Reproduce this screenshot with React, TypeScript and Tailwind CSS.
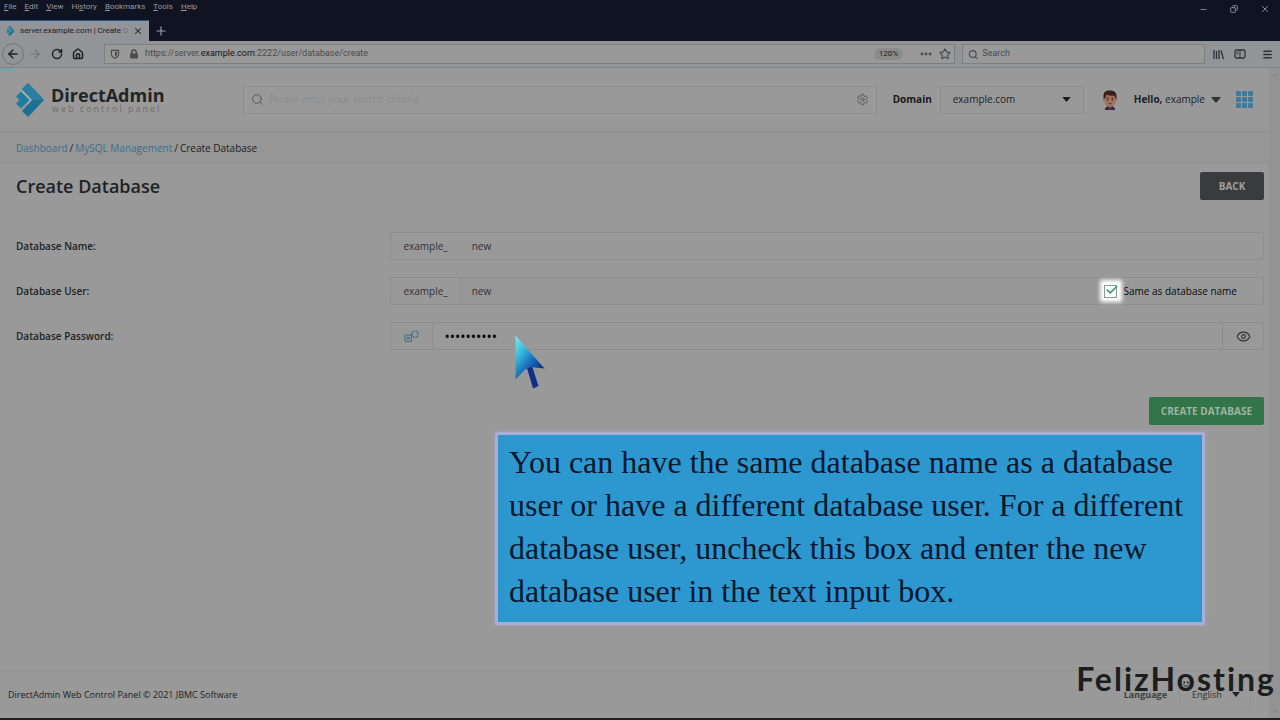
import type { ReactNode } from "react";
import {
	ArrowLeft,
	ArrowRight,
	Check,
	ChevronDown,
	ChevronUp,
	Copy,
	Ellipsis,
	Eye,
	House,
	Menu,
	Minus,
	Plus,
	RotateCw,
	Search,
	Settings,
	Star,
	X,
} from "lucide-react";

const MENU = ["File", "Edit", "View", "History", "Bookmarks", "Tools", "Help"];
// index of the underlined access key for each entry above
const ACCESS_KEYS = [0, 0, 0, 2, 0, 0, 0];

function LogoMark({ className }: { className: string }) {
	return (
		<svg viewBox="0 0 28 34" className={className} aria-hidden="true">
			<path d="M12 0 28 17 12 34 6 28 16 17 6 6Z" fill="#1c7091" />
			<path d="M12 0 28 17H16L6 6Z" fill="#2a7fa3" />
			<path d="M5 8.500 13.500 17 5 25.500 0 20.500 3.500 17 0 13.500Z" fill="#1f7ca2" />
			<path d="M5.500 7.500 15 17 12 20.500" fill="none" stroke="#a3b3b8" strokeWidth="1.200" />
		</svg>
	);
}

function Caret({ className }: { className: string }) {
	return (
		<svg viewBox="0 0 10 6" className={className} aria-hidden="true">
			<path d="M0 0H10L5 6Z" fill="currentColor" />
		</svg>
	);
}

function LibraryIcon() {
	return (
		<svg viewBox="0 0 11 11" className="h-[11px] w-[11px]" aria-hidden="true">
			<path d="M1 1V10M3.500 2V10M6 1V10M8 1.500 10.500 10" stroke="currentColor" strokeWidth="1.300" fill="none" />
		</svg>
	);
}

function SidebarIcon() {
	return (
		<svg viewBox="0 0 12 10" className="h-[10px] w-3" fill="none" stroke="currentColor" aria-hidden="true">
			<rect x="1" y="1" width="10" height="8" rx="1.500" strokeWidth="1.300" />
			<path d="M6 1V9M2.500 3.200H4.500M2.500 5H4.500" />
		</svg>
	);
}

function ShieldIcon() {
	return (
		<svg viewBox="0 0 10 11" className="h-[10px] w-[10px]" aria-hidden="true">
			<path d="M1 1.500H9V5C9 7.500 7.500 9.300 5 10.300 2.500 9.300 1 7.500 1 5Z" fill="none" stroke="currentColor" strokeWidth="1.200" />
			<path d="M5 3H7.300V5C7.300 6.600 6.400 7.800 5 8.500Z" fill="currentColor" />
		</svg>
	);
}

function LockIcon() {
	return (
		<svg viewBox="0 0 10 10" className="h-[10px] w-[10px]" aria-hidden="true">
			<path d="M2.700 5V3.300A2.300 2.300 0 0 1 7.300 3.300V5" fill="none" stroke="currentColor" strokeWidth="1.500" />
			<rect x="1" y="4.500" width="8" height="5" rx="0.800" fill="currentColor" />
		</svg>
	);
}

function Avatar() {
	return (
		<svg viewBox="0 0 16 20" className="h-5 w-4" aria-hidden="true">
			<path d="M3 20C3 17 5 16 8 16S13 17 13 20Z" fill="#2c2b3e" />
			<path d="M6 15.500H10L8 20Z" fill="#9b9098" />
			<path d="M7.400 16.500H8.600L9 20H7Z" fill="#7a2938" />
			<circle cx="2.200" cy="9.500" r="1.400" fill="#8d6450" />
			<circle cx="13.800" cy="9.500" r="1.400" fill="#8d6450" />
			<path d="M2.500 5H13.500V11C13.500 14.500 11 16.500 8 16.500S2.500 14.500 2.500 11Z" fill="#a0735c" />
			<path d="M1.600 8C.8 3 3 .5 7 .5 12 0 15.500 2.500 14.400 8L13.200 8.500 12.500 5.500C9 6 6 5.500 4.500 4.500L3 8.500Z" fill="#3b1d19" />
			<path d="M4.500 8H6.700M9.300 8H11.500" stroke="#3b1d19" strokeWidth=".8" />
			<circle cx="5.700" cy="9.700" r=".7" fill="#2b1a18" />
			<circle cx="10.300" cy="9.700" r=".7" fill="#2b1a18" />
			<path d="M6 13C7.200 14 8.800 14 10 13" stroke="#5f3430" strokeWidth=".8" fill="none" />
		</svg>
	);
}

function DiceIcon() {
	return (
		<svg viewBox="0 0 15 12" className="h-3 w-[15px]" fill="none" stroke="#3d6f89" strokeWidth="1.100" aria-hidden="true">
			<rect x="1" y="5" width="6.500" height="6.500" rx="1" />
			<path d="M2.800 6.800 5.700 9.700M5.700 6.800 2.800 9.700" />
			<path d="M7.500 4 8.500 1.500 12 .8 14.200 3 13.500 6.500 10.500 7.500 8.500 6Z" strokeDasharray="2.500 .6" />
		</svg>
	);
}

function FormRow({ id, label, children }: { id: string; label: string; children: ReactNode }) {
	return (
		<div className="flex items-center">
			<label htmlFor={id} className="w-[30%] shrink-0 font-semibold text-[#202224]">
				{label}
			</label>
			<div className="flex h-7 min-w-0 flex-1 rounded-xs border border-[#8e8e8e] text-[#303234]">{children}</div>
		</div>
	);
}

function BrowserChrome() {
	return (
		<div className="font-['Roboto',sans-serif] text-[8px] text-[#202224]">
			<div className="flex justify-between bg-[#101422]">
				<div>
					<nav className="flex h-[14px] items-center gap-2 pl-1 text-[#9799a0]">
						{MENU.map((item, i) => (
							<button key={item} type="button">
								{item.slice(0, ACCESS_KEYS[i])}
								<u>{item[ACCESS_KEYS[i]]}</u>
								{item.slice(ACCESS_KEYS[i] + 1)}
							</button>
						))}
					</nav>
					<div className="flex items-end pt-[6px]">
						<div className="flex h-[21px] w-[149px] items-center gap-1 border-t border-[#23558f] bg-[#929497] px-[6px]">
							<LogoMark className="h-[10px] w-[9px] shrink-0" />
							<span className="flex-1 whitespace-nowrap pl-px">
								server.example.com | Create <span className="text-[#737578]">D</span>
							</span>
							<button type="button" aria-label="Close tab">
								<X className="h-[10px] w-[10px]" strokeWidth={2.5} />
							</button>
						</div>
						<button type="button" aria-label="New tab" className="flex h-[21px] w-6 items-center justify-center text-[#a0a2a8]">
							<Plus className="h-[14px] w-[14px]" />
						</button>
					</div>
				</div>
				<div className="flex h-[18px] items-center gap-[22px] pr-[10px] text-[#a0a2a8]">
					<button type="button" aria-label="Minimize">
						<Minus className="h-[9px] w-[9px]" />
					</button>
					<button type="button" aria-label="Restore">
						<Copy className="h-2 w-2 -scale-x-100" strokeWidth={2.5} />
					</button>
					<button type="button" aria-label="Close">
						<X className="h-[10px] w-[10px]" />
					</button>
				</div>
			</div>

			<div className="flex h-[27px] items-center border-b border-[#858585] bg-[#929497] pr-[7px] pl-[2px]">
				<button type="button" aria-label="Back" className="flex h-[22px] w-[22px] items-center justify-center rounded-full border border-[#747577]">
					<ArrowLeft className="h-[14px] w-[14px]" strokeWidth={2.5} />
				</button>
				<button type="button" aria-label="Forward" className="ml-1 text-[#717375]">
					<ArrowRight className="h-[14px] w-[14px]" />
				</button>
				<button type="button" aria-label="Reload" className="ml-[9px]">
					<RotateCw className="h-3 w-3" strokeWidth={3} />
				</button>
				<button type="button" aria-label="Home" className="ml-[9px]">
					<House className="h-3 w-3" strokeWidth={3} />
				</button>
				<div className="ml-5 flex h-5 flex-1 items-center border border-[#7d7f81] bg-[#999] pl-[5px] text-[#4a4c4e]">
					<ShieldIcon />
					<span className="ml-[9px]">
						<LockIcon />
					</span>
					<div
						role="textbox"
						aria-label="Address"
						contentEditable
						suppressContentEditableWarning
						className="ml-[6px] flex-1 text-[9px]"
					>
						https://server.<span className="text-[#151617]">example.com</span>:2222/user/database/create
					</div>
					<button type="button" className="rounded-full bg-[#8b8b8b] px-[5px] text-[#202224]">
						120%
					</button>
					<button type="button" aria-label="Page actions" className="ml-4">
						<Ellipsis className="h-[14px] w-[14px]" strokeWidth={3} />
					</button>
					<button type="button" aria-label="Bookmark this page" className="ml-[6px] mr-[3px]">
						<Star className="h-3 w-3" strokeWidth={2.5} />
					</button>
				</div>
				<div className="ml-[7px] flex h-5 w-[243px] items-center gap-1 border border-[#7d7f81] bg-[#999] pl-[5px] text-[#4a4c4e]">
					<Search className="h-[11px] w-[11px]" strokeWidth={2.5} />
					<input aria-label="Search the web" placeholder="Search" className="w-full text-[9px] outline-none placeholder:text-[#4a4c4e]" />
				</div>
				<div className="ml-2 flex items-center gap-[10px] text-[#303234]">
					<button type="button" aria-label="Library">
						<LibraryIcon />
					</button>
					<button type="button" aria-label="Sidebars">
						<SidebarIcon />
					</button>
					<button type="button" aria-label="Open menu" className="ml-[6px]">
						<Menu className="h-[11px] w-[11px]" strokeWidth={3} />
					</button>
				</div>
			</div>
		</div>
	);
}

function PanelHeader() {
	return (
		<header className="flex h-[64px] items-center border-b border-[#8c8c8c] pr-4 pl-4">
			<a href="#" className="flex items-center gap-[7px]">
				<LogoMark className="h-[34px] w-7" />
				<span className="flex flex-col">
					<span className="text-[18px] leading-[18px] font-bold text-[#222426]">DirectAdmin</span>
					<span className="pl-px text-[9px] leading-[9px] tracking-[2px] text-[#6b6d6f]">web control panel</span>
				</span>
			</a>
			<div className="ml-[78px] flex h-7 flex-1 items-center gap-[5px] rounded-xs border border-[#8e8e8e] px-[7px] text-[#4a4c4e]">
				<Search className="h-[13px] w-[13px] shrink-0" strokeWidth={1.5} />
				<input
					aria-label="Search"
					placeholder="Please enter your search criteria"
					className="w-full outline-none placeholder:text-[#8c8c8c]"
				/>
				<button type="button" aria-label="Search settings">
					<Settings className="h-[13px] w-[13px]" strokeWidth={1.5} />
				</button>
			</div>
			<label htmlFor="domain" className="ml-4 font-bold text-[#17191b]">
				Domain
			</label>
			<div className="relative ml-2 flex h-7 w-[144px] items-center rounded-xs border border-[#8e8e8e]">
				<select id="domain" className="h-full w-full appearance-none pl-3 text-[#202224] outline-none">
					<option>example.com</option>
				</select>
				<Caret className="pointer-events-none absolute right-3 h-[5px] w-[9px] text-[#17191b]" />
			</div>
			<span className="ml-[18px]">
				<Avatar />
			</span>
			<button type="button" className="ml-4 flex items-center gap-[6px] text-[#202224]">
				<span>
					<b>Hello,</b> example
				</span>
				<Caret className="h-[6px] w-[10px] text-[#303234]" />
			</button>
			<button type="button" aria-label="Apps" className="ml-[15px] grid grid-cols-3 gap-px">
				{Array.from({ length: 9 }, (_, i) => (
					<span key={i} className="h-[5px] w-[5px] rounded-[1px] bg-[#3f7a98]" />
				))}
			</button>
		</header>
	);
}

function CreateForm() {
	return (
		<form className="flex flex-col gap-[17px] pt-8 pr-[5px] pl-4">
			<FormRow id="db-name" label="Database Name:">
				<span className="flex items-center pr-3 pl-3">example_</span>
				<input id="db-name" defaultValue="new" className="min-w-0 flex-1 pl-3 outline-none" />
			</FormRow>
			<FormRow id="db-user" label="Database User:">
				<span className="flex items-center border-r border-[#929292] pr-[11px] pl-3">example_</span>
				<input id="db-user" defaultValue="new" readOnly className="min-w-0 flex-1 bg-[#969696] pl-3 outline-none" />
				<label className="flex items-center gap-[6px] pr-[26px] text-[#07090b]">
					<span className="relative flex h-[14px] w-[14px] items-center justify-center bg-white shadow-[0_0_4px_4px_#fff]">
						<input type="checkbox" defaultChecked className="h-[13px] w-[13px] appearance-none border border-[#8c9a94]" />
						<Check className="pointer-events-none absolute -top-px left-px h-[14px] w-[14px] text-[#3f9a72]" strokeWidth={3} />
					</span>
					Same as database name
				</label>
			</FormRow>
			<FormRow id="db-password" label="Database Password:">
				<button type="button" aria-label="Generate password" className="flex w-[42px] items-center justify-center border-r border-[#8e8e8e]">
					<DiceIcon />
				</button>
				<input
					id="db-password"
					type="password"
					defaultValue="Xk29vbQ7mt"
					className="min-w-0 flex-1 pl-[11px] text-[14px] text-black outline-none"
				/>
				<button type="button" aria-label="Show password" className="flex w-[41px] items-center justify-center border-l border-[#8b8b8b]">
					<Eye className="h-[15px] w-[15px]" strokeWidth={1.75} />
				</button>
			</FormRow>
			<div className="flex justify-end pt-[30px]">
				<button type="submit" className="h-7 rounded-xs bg-[#327549] px-3 font-bold text-[#a0b3a6]">
					CREATE DATABASE
				</button>
			</div>
		</form>
	);
}

function Callout() {
	return (
		<aside className="absolute top-[432px] left-[495px] w-[710px] rounded-xs border-[3px] border-[#a9aed2] bg-[#2d98d0] pt-[6px] pb-[9px] pl-[11px] font-['Liberation_Serif',serif] text-[32px] leading-[43px] text-[#07172c] shadow-[0_0_4px_#a9a5c4]">
			<p>
				You can have the same database name as a database
				<br />
				user or have a different database user. For a different
				<br />
				database user, uncheck this box and enter the new
				<br />
				database user in the text input box.
			</p>
		</aside>
	);
}

function Pointer() {
	return (
		<svg viewBox="0 0 30 54" className="absolute top-[335px] left-[515px] h-[54px] w-[30px]" aria-hidden="true">
			<defs>
				<linearGradient id="pointer-fill" x1="0" y1="0" x2=".8" y2="1">
					<stop offset="0" stopColor="#7cf0ee" />
					<stop offset=".35" stopColor="#35b6da" />
					<stop offset=".65" stopColor="#1565b5" />
					<stop offset="1" stopColor="#0c1d70" />
				</linearGradient>
			</defs>
			<path d="M12 33 17 31 23.500 51 18 53.500Z" fill="#10308a" />
			<path d="M.5.500 29.500 33.500 15.500 32 10 34.500.5 44.500Z" fill="url(#pointer-fill)" />
		</svg>
	);
}

function Watermark() {
	return (
		<div className="absolute right-1 bottom-5 font-['Lato',sans-serif] text-[32px] leading-[38px] font-bold tracking-[2px] text-[#1c1d1e]">
			FelizH
			<span className="relative">
				o
				<svg viewBox="0 0 10 10" className="absolute bottom-[9px] left-1 h-[10px] w-[10px]" aria-hidden="true">
					<circle cx="3.300" cy="3.500" r=".9" fill="#1c1d1e" />
					<circle cx="6.700" cy="3.500" r=".9" fill="#1c1d1e" />
					<path d="M2.500 5.500C3.500 7.800 6.500 7.800 7.500 5.500" stroke="#1c1d1e" fill="none" />
				</svg>
			</span>
			sting
		</div>
	);
}

export default function App() {
	return (
		<div className="relative flex min-h-screen flex-col border-b-2 border-[#202022] bg-[#999] font-['Open_Sans','Noto_Sans',sans-serif] text-[10px]">
			<BrowserChrome />
			<div className="flex flex-1">
				<div className="flex flex-1 flex-col">
					<div className="-mb-1 h-1 w-[15px] bg-[#7ba3a8]" />
					<PanelHeader />
					<nav className="flex h-8 items-center gap-[2px] bg-[#969696] px-4 text-[#202224]">
						<a href="#" className="text-[#3c6f8c]">
							Dashboard
						</a>
						/
						<a href="#" className="text-[#3c6f8c]">
							MySQL Management
						</a>
						/<span>Create Database</span>
					</nav>
					<main className="flex-1">
						<div className="flex items-center justify-between pt-2 pr-[5px] pl-4">
							<h1 className="text-[18px] leading-6 font-semibold text-[#202224]">Create Database</h1>
							<button type="button" className="h-7 w-16 rounded-xs bg-[#3a3b3c] font-bold text-[#a0a0a0]">
								BACK
							</button>
						</div>
						<CreateForm />
					</main>
					<footer className="flex h-[48px] items-center justify-between border-t border-[#929292] pr-[18px] pl-2 text-[9px] text-[#202224]">
						<p>DirectAdmin Web Control Panel © 2021 JBMC Software</p>
						<div className="flex items-center">
							<label htmlFor="language" className="font-bold text-[#3c3e40]">
								Language
							</label>
							<div className="relative ml-3 flex h-7 w-[72px] items-center rounded-xs border border-[#939393]">
								<select id="language" className="w-full appearance-none pl-3 text-[#303234] outline-none">
									<option>English</option>
								</select>
								<Caret className="pointer-events-none absolute right-[10px] h-[5px] w-2" />
							</div>
						</div>
					</footer>
				</div>
				<div className="flex w-[11px] flex-col items-center justify-between bg-[#939393] py-[3px] text-[#737373]">
					<ChevronUp className="h-2 w-2" />
					<ChevronDown className="h-2 w-2" />
				</div>
			</div>
			<Pointer />
			<Callout />
			<Watermark />
		</div>
	);
}
